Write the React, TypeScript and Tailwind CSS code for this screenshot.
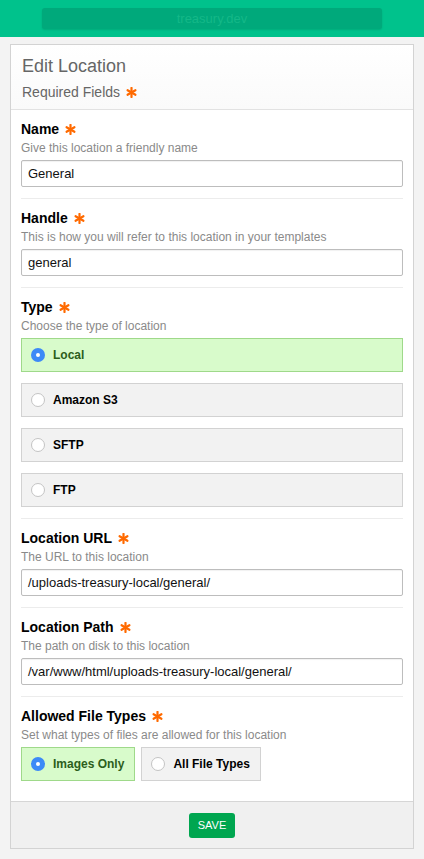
import React from "react";

const font = { fontFamily: '"Liberation Sans", Arial, sans-serif' };

function Star() {
  return (
    <svg className="inline-block ml-[6px] -mt-[2px] align-middle" width="11" height="11" viewBox="0 0 12 12">
      <g stroke="#ff6a00" strokeWidth="2.4" strokeLinecap="round">
        <line x1="6" y1="1" x2="6" y2="11" />
        <line x1="1.7" y1="3.5" x2="10.3" y2="8.5" />
        <line x1="1.7" y1="8.5" x2="10.3" y2="3.5" />
      </g>
    </svg>
  );
}

function Radio({ on }: { on?: boolean }) {
  return on ? (
    <span className="w-[14px] h-[14px] rounded-full bg-[#3d8af7] flex items-center justify-center shrink-0">
      <span className="w-[4px] h-[4px] rounded-full bg-white" />
    </span>
  ) : (
    <span className="w-[14px] h-[14px] rounded-full bg-white border border-[#c4c4c4] shrink-0" />
  );
}

function Option({ label, on, wide = true }: { label: string; on?: boolean; wide?: boolean }) {
  return (
    <div
      className={`h-[34px] flex items-center gap-[8px] pl-[9px] pr-[10px] border text-[12px] font-bold ${
        wide ? "w-full" : ""
      } ${on ? "bg-[#d8fbcb] border-[#9fd98a] text-[#2c5e1c]" : "bg-[#f2f2f2] border-[#d2d2d2] text-black"}`}
    >
      <Radio on={on} />
      <span>{label}</span>
    </div>
  );
}

function Section({ title, desc, children, last }: { title: string; desc: string; children: React.ReactNode; last?: boolean }) {
  return (
    <div className={`pt-[9px] ${last ? "pb-[20px]" : "pb-[11px] border-b border-[#ececec]"}`}>
      <div className="text-[14px] leading-[20px] font-bold text-black">
        {title}
        <Star />
      </div>
      <div className="text-[12px] leading-[16px] text-[#8a8a8a] mt-[1px]">{desc}</div>
      <div className="mt-[4px]">{children}</div>
    </div>
  );
}

function Input({ value }: { value: string }) {
  return (
    <div className="h-[27px] border border-[#bdbdbd] rounded-[2px] bg-white flex items-center px-[6px] text-[13px] text-[#111] shadow-[inset_0_1px_1px_rgba(0,0,0,0.06)]">
      {value}
    </div>
  );
}

export default function App() {
  return (
    <div className="min-h-screen bg-[#f3f3f3]" style={font}>
      <div className="h-[37px] bg-[#00c28c] flex items-center justify-center">
        <div className="w-[340px] h-[21px] rounded-[3px] bg-[#00a97b] shadow-[0_1px_2px_rgba(0,0,0,0.12)] flex items-center justify-center text-[13px] text-[#14b888]">
          treasury.dev
        </div>
      </div>

      <div className="mx-[10px] mt-[7px] border border-[#d3d3d3] bg-white">
        <div className="px-[11px] pt-[9px] pb-[7px] bg-gradient-to-b from-white to-[#fafafa] border-b border-[#e2e2e2]">
          <div className="text-[18px] leading-[24px] text-[#666]">Edit Location</div>
          <div className="text-[14px] leading-[20px] text-[#666] mt-[4px]">
            Required Fields
            <Star />
          </div>
        </div>

        <div className="px-[10px]">
          <Section title="Name" desc="Give this location a friendly name">
            <Input value="General" />
          </Section>
          <Section title="Handle" desc="This is how you will refer to this location in your templates">
            <Input value="general" />
          </Section>
          <Section title="Type" desc="Choose the type of location">
            <div className="flex flex-col gap-[11px]">
              <Option label="Local" on />
              <Option label="Amazon S3" />
              <Option label="SFTP" />
              <Option label="FTP" />
            </div>
          </Section>
          <Section title="Location URL" desc="The URL to this location">
            <Input value="/uploads-treasury-local/general/" />
          </Section>
          <Section title="Location Path" desc="The path on disk to this location">
            <Input value="/var/www/html/uploads-treasury-local/general/" />
          </Section>
          <Section title="Allowed File Types" desc="Set what types of files are allowed for this location" last>
            <div className="flex gap-[6px] mt-[1px]">
              <Option label="Images Only" on wide={false} />
              <Option label="All File Types" wide={false} />
            </div>
          </Section>
        </div>

        <div className="h-[47px] bg-[#f0f0f0] border-t border-[#d6d6d6] flex items-center justify-center">
          <div className="h-[25px] px-[9px] rounded-[3px] bg-[#00a650] text-white text-[11px] flex items-center">SAVE</div>
        </div>
      </div>
    </div>
  );
}
